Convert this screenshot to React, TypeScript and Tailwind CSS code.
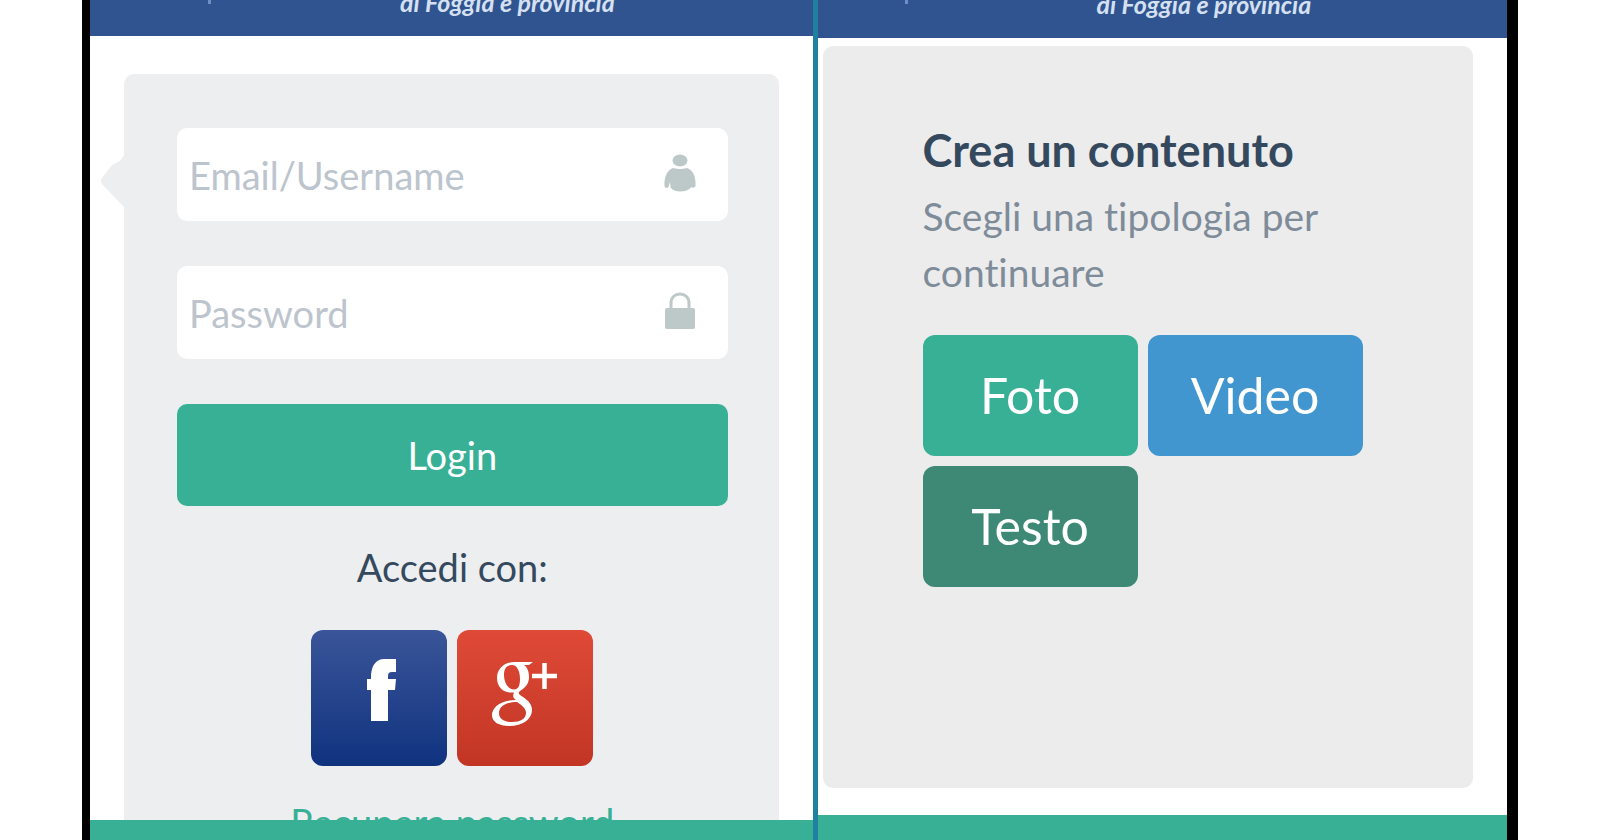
import type { ReactNode } from "react";

function UserIcon() {
  return (
    <svg viewBox="0 0 32 38" className="h-[38px] w-8" fill="#bdc9c8" aria-hidden="true">
      <ellipse cx="16" cy="6.5" rx="7.5" ry="6" />
      <path d="M9 14 Q16 16 23 14 C29 16 32 22 31.500 32 C31 34 28.500 34 27.500 33 C25 36 21 37.500 16 37.500 C12 37.500 8.500 36 6.500 33.500 L6 28 L4.500 33 C3 34.500 0.500 34 0.500 32 C0 23 3 16 9 14 Z" />
    </svg>
  );
}

function LockIcon() {
  return (
    <svg viewBox="0 0 32 38" className="h-[38px] w-8" fill="none" aria-hidden="true">
      <path d="M7 18 V11 C7 -1 25 -1 25 11 V18" stroke="#bdc9c8" strokeWidth="3" />
      <rect x="1" y="16" width="30" height="21" rx="2" fill="#bdc9c8" />
    </svg>
  );
}

function FacebookIcon() {
  return (
    <svg viewBox="0 0 30 64" className="h-16 w-[30px]" fill="#fff" aria-hidden="true">
      <path d="M5 63 V32 H1 V21 H5 V17 C6 6 11 1 18 1 H30 V14 H26 C23 14 22 15.500 22 18 V21 H30 L29 32 H22 V63 Z" />
    </svg>
  );
}

function GooglePlusIcon() {
  return (
    <svg viewBox="0 0 66 66" className="h-[66px] w-[66px]" aria-hidden="true">
      <path
        fill="#fff"
        fillRule="evenodd"
        d="M41 1 H23 C12 1 5 8 5 17 C5 26 11 31.500 19 31.500 C20 31.500 21 31.500 22 31.400 C20 36 22 37.500 24 39 C9 39 0 46 0 54 C0 61 7 65 17 65 C31 65 40 58 40 49 C40 43 36 39.500 31 36 C28 34 25 32.500 28 30 C33 27 37 23 37 16 C37 10 35 6 32 4 H37 Z M20 4 C25 4 28 10 28 18 C28 25 26 28.500 22 28.500 C16 28.500 12 21 12 14 C12 7 15 4 20 4 Z M25 41 C31 45 34 48 34 52 C34 58 28 61 20 61 C12 61 7 58 7 52 C7 45 14 41 25 41 Z"
      />
      <path d="M52.500 2 V28 M40 15 H65" stroke="#fff" strokeWidth="4.500" fill="none" />
    </svg>
  );
}

type ScreenProps = {
  header: string;
  footer: string;
  className: string;
  children: ReactNode;
};

function Screen({ header, footer, className, children }: ScreenProps) {
  return (
    <section className={`flex min-w-0 flex-col bg-white ${className}`}>
      <header className={`flex shrink-0 items-end overflow-hidden bg-[#30548f] pb-[18px] ${header}`}>
        <span className="h-1 w-[3px] self-start bg-[#6f8fc4]" />
        <p className="ml-[189px] text-[25px] leading-[32px] font-bold whitespace-nowrap text-[#d5e0f2] italic">
          di Foggia e provincia
        </p>
      </header>
      <div className="min-h-0 flex-1 overflow-hidden">{children}</div>
      <footer className={`shrink-0 bg-[#38b096] ${footer}`} />
    </section>
  );
}

function Field({ id, label, type, icon }: { id: string; label: string; type: string; icon: ReactNode }) {
  return (
    <div className="flex h-[93px] items-center rounded-[10px] bg-white pr-8 pl-3">
      <input
        id={id}
        type={type}
        aria-label={label}
        placeholder={label}
        className="h-full min-w-0 flex-1 bg-transparent text-[38px] text-[#2c3e50] outline-none placeholder:text-[#bcc4cd]"
      />
      <label htmlFor={id} className="pb-1">
        {icon}
      </label>
    </div>
  );
}

const contentTypes = [
  { name: "Foto", color: "bg-[#38b096]" },
  { name: "Video", color: "bg-[#4196d0]" },
  { name: "Testo", color: "bg-[#3e8976]" },
];

export default function App() {
  return (
    <div className="h-screen overflow-hidden bg-white px-[82px] font-['Lato',sans-serif] [font-variant-ligatures:none]">
      <main className="flex h-full border-r-[11px] border-l-8 border-black">
        <Screen header="h-9 pl-[118px]" footer="h-5" className="flex-[722]">
          <div className="relative mx-[34px] mt-[38px] rounded-[10px] bg-[#edeef0] pt-[54px] pr-[51px] pb-12 pl-[53px]">
            {/* Speech bubble arrow */}
            <svg viewBox="0 0 25 54" className="absolute top-20 -left-6 h-[54px] w-[25px]" fill="#edeef0" aria-hidden="true">
              <path d="M25 0 L20 7 L12 11 L2 24 Q0 27 2 30 L25 54 Z" />
            </svg>

            <form onSubmit={(e) => e.preventDefault()} className="flex flex-col gap-[45px]">
              <Field id="username" label="Email/Username" type="text" icon={<UserIcon />} />
              <Field id="password" label="Password" type="password" icon={<LockIcon />} />
              <button type="submit" className="h-[102px] rounded-[10px] bg-[#38b096] text-[38px] text-white">
                Login
              </button>
            </form>

            <p className="mt-[38px] text-center text-[38px] leading-[46px] text-[#34495e]">Accedi con:</p>

            <div className="mt-10 flex justify-center gap-[10px]">
              <button
                type="button"
                aria-label="Facebook"
                className="flex size-[136px] items-center justify-center rounded-xl bg-linear-to-b from-[#3a5599] to-[#0f327f] pb-4 pl-1"
              >
                <FacebookIcon />
              </button>
              <button
                type="button"
                aria-label="Google+"
                className="flex size-[136px] items-center justify-center rounded-xl bg-linear-to-b from-[#df4a37] to-[#c23524] pb-2"
              >
                <GooglePlusIcon />
              </button>
            </div>

            <p className="mt-[33px] text-center text-[38px] leading-[46px]">
              <a href="#recupera" className="text-[#38b096]">
                Recupera password
              </a>
            </p>
          </div>
        </Screen>

        <div className="w-[5px] bg-[#1f809f]" />

        <Screen header="h-[38px] pl-[87px]" footer="h-[25px]" className="flex-[689]">
          <div className="flex h-full flex-col pt-2 pr-[34px] pb-[27px] pl-[5px]">
            <div className="flex-1 rounded-[10px] bg-[#edeced] px-[100px] pt-[76px]">
              <h1 className="text-[45px] leading-[56px] font-bold text-[#34495e]">Crea un contenuto</h1>
              <p className="mt-[10px] text-[39px] leading-[56px] text-[#7e8c9a]">Scegli una tipologia per continuare</p>
              <div className="mt-[35px] flex flex-wrap gap-[10px]">
                {contentTypes.map((type) => (
                  <button
                    key={type.name}
                    type="button"
                    className={`h-[121px] w-[215px] rounded-xl text-[50px] text-white ${type.color}`}
                  >
                    {type.name}
                  </button>
                ))}
              </div>
            </div>
          </div>
        </Screen>
      </main>
    </div>
  );
}
